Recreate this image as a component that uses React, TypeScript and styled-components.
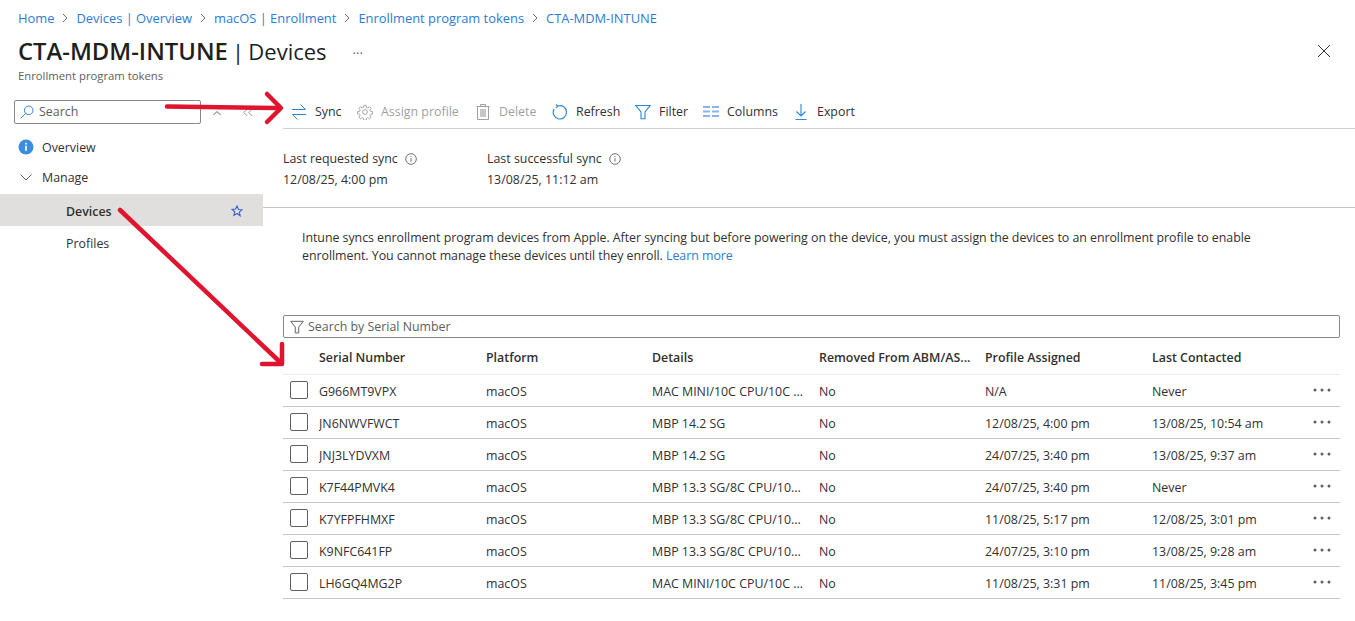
import React from "react";
import styled, { createGlobalStyle } from "styled-components";

const GlobalStyle = createGlobalStyle`
  html, body {
    margin: 0;
    padding: 0;
    background: #fff;
    overflow: hidden;
  }
  body {
    font-family: "Open Sans", "Noto Sans", sans-serif;
    font-size: 12.4px;
    color: #323130;
  }
`;

const crumbs = [
  "Home",
  "Devices | Overview",
  "macOS | Enrollment",
  "Enrollment program tokens",
  "CTA-MDM-INTUNE",
];

const columns = [
  "Serial Number",
  "Platform",
  "Details",
  "Removed From ABM/AS...",
  "Profile Assigned",
  "Last Contacted",
];

const rows = [
  ["G966MT9VPX", "macOS", "MAC MINI/10C CPU/10C ...", "No", "N/A", "Never"],
  ["JN6NWVFWCT", "macOS", "MBP 14.2 SG", "No", "12/08/25, 4:00 pm", "13/08/25, 10:54 am"],
  ["JNJ3LYDVXM", "macOS", "MBP 14.2 SG", "No", "24/07/25, 3:40 pm", "13/08/25, 9:37 am"],
  ["K7F44PMVK4", "macOS", "MBP 13.3 SG/8C CPU/10...", "No", "24/07/25, 3:40 pm", "Never"],
  ["K7YFPFHMXF", "macOS", "MBP 13.3 SG/8C CPU/10...", "No", "11/08/25, 5:17 pm", "12/08/25, 3:01 pm"],
  ["K9NFC641FP", "macOS", "MBP 13.3 SG/8C CPU/10...", "No", "24/07/25, 3:10 pm", "13/08/25, 9:28 am"],
  ["LH6GQ4MG2P", "macOS", "MAC MINI/10C CPU/10C ...", "No", "11/08/25, 3:31 pm", "11/08/25, 3:45 pm"],
];

const SyncIcon = () => (
  <svg width="16" height="16" viewBox="0 0 16 16" fill="none" stroke="#2b88d8" strokeWidth="1">
    <path d="M1 5.500h13.500M9.500 0.500l5 5M15 10.500H1.500M6.500 15.500l-5-5" />
  </svg>
);

const GearIcon = () => (
  <svg width="16" height="16" viewBox="0 0 24 24" fill="none" stroke="#a19f9d" strokeWidth="1.4">
    <circle cx="12" cy="12" r="3.6" />
    <path d="M10.300 2h3.400l.5 3 2 .9 2.500-1.800 2.400 2.400-1.800 2.500.9 2 3 .5v3.400l-3 .5-.9 2 1.800 2.500-2.400 2.400-2.500-1.800-2 .9-.5 3h-3.400l-.5-3-2-.9-2.500 1.800-2.400-2.400 1.800-2.500-.9-2-3-.5v-3.400l3-.5.9-2-1.800-2.500 2.400-2.400 2.500 1.800 2-.9z" />
  </svg>
);

const TrashIcon = () => (
  <svg width="14" height="16" viewBox="0 0 14 16" fill="none" stroke="#a19f9d" strokeWidth="1">
    <path d="M0.500 2.500h13M4.500 2.500v-2h5v2M1.500 2.500v13h11v-13" />
    <rect x="4" y="5" width="6" height="8" fill="#c8c6c4" stroke="none" />
  </svg>
);

const RefreshIcon = () => (
  <svg width="18" height="18" viewBox="0 0 18 18" fill="none" stroke="#2b88d8" strokeWidth="1.300">
    <path d="M6.500 2.200A7.500 7.500 0 1 1 2.400 5.500M4.600 0.600l2 2-2.300 1.800" />
  </svg>
);

const FilterIcon = ({ color = "#2b88d8", size = 16 }: { color?: string; size?: number }) => (
  <svg width={size} height={size} viewBox="0 0 16 16" fill="none" stroke={color} strokeWidth="1.1">
    <path d="M0.800 1.500h14.400L10 8v6.800L6 14.800V8z" />
  </svg>
);

const ColumnsIcon = () => (
  <svg width="16" height="12" viewBox="0 0 16 12" fill="#8ab4e8">
    <rect x="0" y="0" width="7" height="2" />
    <rect x="0" y="4.500" width="7" height="2" />
    <rect x="0" y="9" width="7" height="2" />
    <rect x="9" y="0" width="7" height="2" />
    <rect x="9" y="4.500" width="7" height="2" />
    <rect x="9" y="9" width="7" height="2" />
  </svg>
);

const ExportIcon = () => (
  <svg width="12" height="16" viewBox="0 0 12 16" fill="none" stroke="#2b88d8" strokeWidth="1.1">
    <path d="M6 0v11.500M1.500 7.500L6 12l4.500-4.500M0.500 15.500h11" />
  </svg>
);

const InfoOutline = () => (
  <svg width="12" height="12" viewBox="0 0 12 12" fill="none" stroke="#605e5c" strokeWidth="0.9">
    <circle cx="6" cy="6" r="5.300" />
    <path d="M6 5.200v3.400M6 3.200v1" />
  </svg>
);

const InfoFilled = () => (
  <svg width="16" height="16" viewBox="0 0 16 16">
    <circle cx="8" cy="8" r="7.500" fill="#3b8ddd" />
    <path d="M8 6.800v5M8 3.800v1.600" stroke="#fff" strokeWidth="1.700" />
  </svg>
);

const SearchGlass = () => (
  <svg width="14" height="14" viewBox="0 0 14 14" fill="none" stroke="#2b88d8" strokeWidth="1">
    <circle cx="8.700" cy="5.300" r="4.300" />
    <path d="M5.600 8.400L0.800 13.200" />
  </svg>
);

const Chevron = ({ d, w = 12, color = "#605e5c" }: { d: string; w?: number; color?: string }) => (
  <svg width={w} height="8" viewBox={`0 0 ${w} 8`} fill="none" stroke={color} strokeWidth="1">
    <path d={d} />
  </svg>
);

const Star = () => (
  <svg width="12" height="12" viewBox="0 0 24 24" fill="none" stroke="#3a5fcd" strokeWidth="2.200">
    <path d="M12 2l2.900 6.900 7.100.6-5.400 4.700 1.700 7.300L12 17l-6.300 3.800 1.700-7.300L2 8.800l7.100-.6z" />
  </svg>
);

const CloseIcon = () => (
  <svg width="14" height="14" viewBox="0 0 14 14" fill="none" stroke="#323130" strokeWidth="1">
    <path d="M1 1l12 12M13 1L1 13" />
  </svg>
);

const BreadcrumbSep = () => (
  <svg width="6" height="10" viewBox="0 0 6 10" fill="none" stroke="#605e5c" strokeWidth="0.9">
    <path d="M1 1l4 4-4 4" />
  </svg>
);

const MoreDots = () => (
  <svg width="18" height="4" viewBox="0 0 18 4" fill="#605e5c">
    <circle cx="2" cy="2" r="1.500" />
    <circle cx="9" cy="2" r="1.500" />
    <circle cx="16" cy="2" r="1.500" />
  </svg>
);

export default function App() {
  return (
    <Page>
      <GlobalStyle />
      <Breadcrumbs>
        {crumbs.map((c, i) => (
          <React.Fragment key={c}>
            {i > 0 && <BreadcrumbSep />}
            <Crumb>{c}</Crumb>
          </React.Fragment>
        ))}
      </Breadcrumbs>
      <TitleRow>
        <Title>
          <strong>CTA-MDM-INTUNE</strong> | Devices
        </Title>
        <TitleMore>···</TitleMore>
        <CloseButton>
          <CloseIcon />
        </CloseButton>
      </TitleRow>
      <Subtitle>Enrollment program tokens</Subtitle>
      <Body>
        <Sidebar>
          <SearchRow>
            <SearchBox>
              <SearchGlass />
              <span>Search</span>
            </SearchBox>
            <Chevron w={8} d="M0.500 7l3.500-3.500 3.500 3.500" />
            <Chevron w={10} d="M4.500 1l-4 3.500 4 3.500M9.500 1l-4 3.500 4 3.500" color="#a19f9d" />
          </SearchRow>
          <NavItem>
            <NavIcon><InfoFilled /></NavIcon>
            <span>Overview</span>
          </NavItem>
          <NavItem>
            <NavIcon><Chevron w={12} d="M0.500 1.500l5.500 5.500 5.500-5.500" /></NavIcon>
            <span>Manage</span>
          </NavItem>
          <SubNavItem $active>
            <span>Devices</span>
            <Star />
          </SubNavItem>
          <SubNavItem>
            <span>Profiles</span>
          </SubNavItem>
        </Sidebar>
        <Main>
          <Toolbar>
            <ToolButton $width={66}><ToolIcon><SyncIcon /></ToolIcon><span>Sync</span></ToolButton>
            <ToolButton $width={118} $disabled><ToolIcon><GearIcon /></ToolIcon><span>Assign profile</span></ToolButton>
            <ToolButton $width={77} $disabled><ToolIcon><TrashIcon /></ToolIcon><span>Delete</span></ToolButton>
            <ToolButton $width={83}><ToolIcon><RefreshIcon /></ToolIcon><span>Refresh</span></ToolButton>
            <ToolButton $width={68}><ToolIcon><FilterIcon /></ToolIcon><span>Filter</span></ToolButton>
            <ToolButton $width={90}><ToolIcon><ColumnsIcon /></ToolIcon><span>Columns</span></ToolButton>
            <ToolButton $width={80}><ToolIcon><ExportIcon /></ToolIcon><span>Export</span></ToolButton>
          </Toolbar>
          <SyncInfo>
            <SyncBlock>
              <SyncLabel>Last requested sync <InfoOutline /></SyncLabel>
              <div>12/08/25, 4:00 pm</div>
            </SyncBlock>
            <SyncBlock>
              <SyncLabel>Last successful sync <InfoOutline /></SyncLabel>
              <div>13/08/25, 11:12 am</div>
            </SyncBlock>
          </SyncInfo>
          <Description>
            Intune syncs enrollment program devices from Apple. After syncing but before powering on the device, you must assign the devices to an enrollment profile to enable enrollment. You cannot manage these devices until they enroll. <LearnMore>Learn more</LearnMore>
          </Description>
          <TableArea>
            <FilterBox>
              <FilterIcon color="#605e5c" size={14} />
              <span>Search by Serial Number</span>
            </FilterBox>
            <HeaderRow>
              <span />
              {columns.map((c) => (
                <HeaderCell key={c}>{c}</HeaderCell>
              ))}
              <span />
            </HeaderRow>
            {rows.map((r) => (
              <Row key={r[0]}>
                <Checkbox />
                {r.map((v, i) => (
                  <Cell key={i}>{v}</Cell>
                ))}
                <RowMore><MoreDots /></RowMore>
              </Row>
            ))}
          </TableArea>
        </Main>
      </Body>
      <ArrowLayer width="1355" height="621" viewBox="0 0 1355 621">
        <g fill="none" stroke="#e0142e" strokeWidth="4.500" strokeLinecap="round" strokeLinejoin="round">
          <path d="M167 106.500L279 108" />
          <path d="M267 94L281 108L267 122" />
          <path d="M120 210L281 363" />
          <path d="M282 344L282 364L262 364" />
        </g>
      </ArrowLayer>
    </Page>
  );
}

const Page = styled.div`
  position: relative;
  width: 1355px;
  height: 621px;
  overflow: hidden;
`;

const Breadcrumbs = styled.div`
  display: flex;
  align-items: center;
  gap: 8px;
  padding: 9px 0 0 18px;
  height: 18px;
`;

const Crumb = styled.span`
  color: #2b7cd3;
  font-size: 12.9px;
`;

const TitleRow = styled.div`
  display: flex;
  align-items: center;
  height: 34px;
  margin-top: 7px;
  padding: 0 24px 0 18px;
`;

const Title = styled.h1`
  margin: 0;
  font-size: 22px;
  font-weight: 400;
  word-spacing: -1.500px;
  color: #201f1e;
  strong {
    font-size: 23.800px;
    font-weight: 600;
    word-spacing: 0;
  }
`;

const TitleMore = styled.span`
  margin-left: 26px;
  color: #605e5c;
  font-size: 13px;
  margin-top: 4px;
`;

const CloseButton = styled.span`
  display: flex;
  margin-left: auto;
`;

const Subtitle = styled.div`
  padding-left: 18px;
  font-size: 11.300px;
  line-height: 15px;
  color: #605e5c;
  height: 27px;
`;

const Body = styled.div`
  display: flex;
`;

const Sidebar = styled.nav`
  width: 263px;
  flex: none;
`;

const SearchRow = styled.div`
  display: flex;
  align-items: center;
  gap: 22px;
  padding: 0 0 0 14px;
  height: 33px;
  margin-bottom: 4px;
`;

const SearchBox = styled.div`
  display: flex;
  align-items: center;
  gap: 5px;
  box-sizing: border-box;
  width: 187px;
  height: 24px;
  padding-left: 5px;
  border: 1px solid #8a8886;
  border-radius: 2px;
  color: #605e5c;
  margin-right: -10px;
`;

const NavItem = styled.div`
  display: flex;
  align-items: center;
  gap: 8px;
  height: 30px;
  padding-left: 18px;
  &:nth-child(3) {
    margin-bottom: 2px;
  }
`;

const NavIcon = styled.span`
  display: flex;
  justify-content: center;
  width: 16px;
`;

const SubNavItem = styled.div<{ $active?: boolean }>`
  display: flex;
  align-items: center;
  justify-content: space-between;
  box-sizing: border-box;
  height: 32px;
  padding: 2px 20px 0 66px;
  background: ${(p) => (p.$active ? "#e1dfdd" : "transparent")};
  font-weight: ${(p) => (p.$active ? 600 : 400)};
`;

const Main = styled.main`
  flex: 1;
  min-width: 0;
`;

const Toolbar = styled.div`
  display: flex;
  align-items: center;
  height: 33px;
  margin-left: 20px;
  border-bottom: 1px solid #d2d0ce;
  padding-left: 8px;
`;

const ToolButton = styled.div<{ $width: number; $disabled?: boolean }>`
  display: flex;
  align-items: center;
  gap: 8px;
  width: ${(p) => p.$width}px;
  flex: none;
  color: ${(p) => (p.$disabled ? "#a19f9d" : "#323130")};
`;

const ToolIcon = styled.span`
  display: flex;
  justify-content: center;
  width: 16px;
  flex: none;
`;

const SyncInfo = styled.div`
  display: flex;
  height: 78px;
  margin-left: 20px;
  padding-top: 19px;
  box-sizing: border-box;
`;

const SyncBlock = styled.div`
  width: 204px;
  line-height: 21px;
`;

const SyncLabel = styled.div`
  display: flex;
  align-items: center;
  gap: 7px;
`;

const Description = styled.div`
  box-sizing: border-box;
  border-top: 1px solid #c8c6c4;
  padding: 21px 90px 0 39px;
  height: 108px;
  line-height: 18px;
  letter-spacing: -0.04px;
`;

const LearnMore = styled.a`
  color: #2b7cd3;
`;

const TableArea = styled.div`
  margin: 0 15px 0 20px;
`;

const FilterBox = styled.div`
  display: flex;
  align-items: center;
  gap: 4px;
  box-sizing: border-box;
  height: 23px;
  padding-left: 6px;
  border: 1px solid #8a8886;
  border-radius: 2px;
  color: #605e5c;
`;

const gridColumns = "36px 167px 166px 167px 166px 167px 1fr 27px";

const HeaderRow = styled.div`
  display: grid;
  grid-template-columns: ${gridColumns};
  align-items: center;
  height: 37px;
  padding-top: 2px;
  box-sizing: border-box;
  border-bottom: 1px solid #edebe9;
`;

const HeaderCell = styled.div`
  font-weight: 600;
  white-space: nowrap;
`;

const Row = styled.div`
  display: grid;
  grid-template-columns: ${gridColumns};
  align-items: center;
  height: 32px;
  box-sizing: border-box;
  border-bottom: 1px solid #c8c6c4;
`;

const Cell = styled.div`
  white-space: nowrap;
  overflow: hidden;
  padding-top: 1px;
`;

const Checkbox = styled.span`
  display: block;
  box-sizing: border-box;
  width: 18px;
  height: 18px;
  margin-left: 7px;
  margin-top: -2px;
  border: 1px solid #605e5c;
  border-radius: 2px;
`;

const RowMore = styled.span`
  display: flex;
  margin-top: -2px;
`;

const ArrowLayer = styled.svg`
  position: absolute;
  inset: 0;
  pointer-events: none;
`;
